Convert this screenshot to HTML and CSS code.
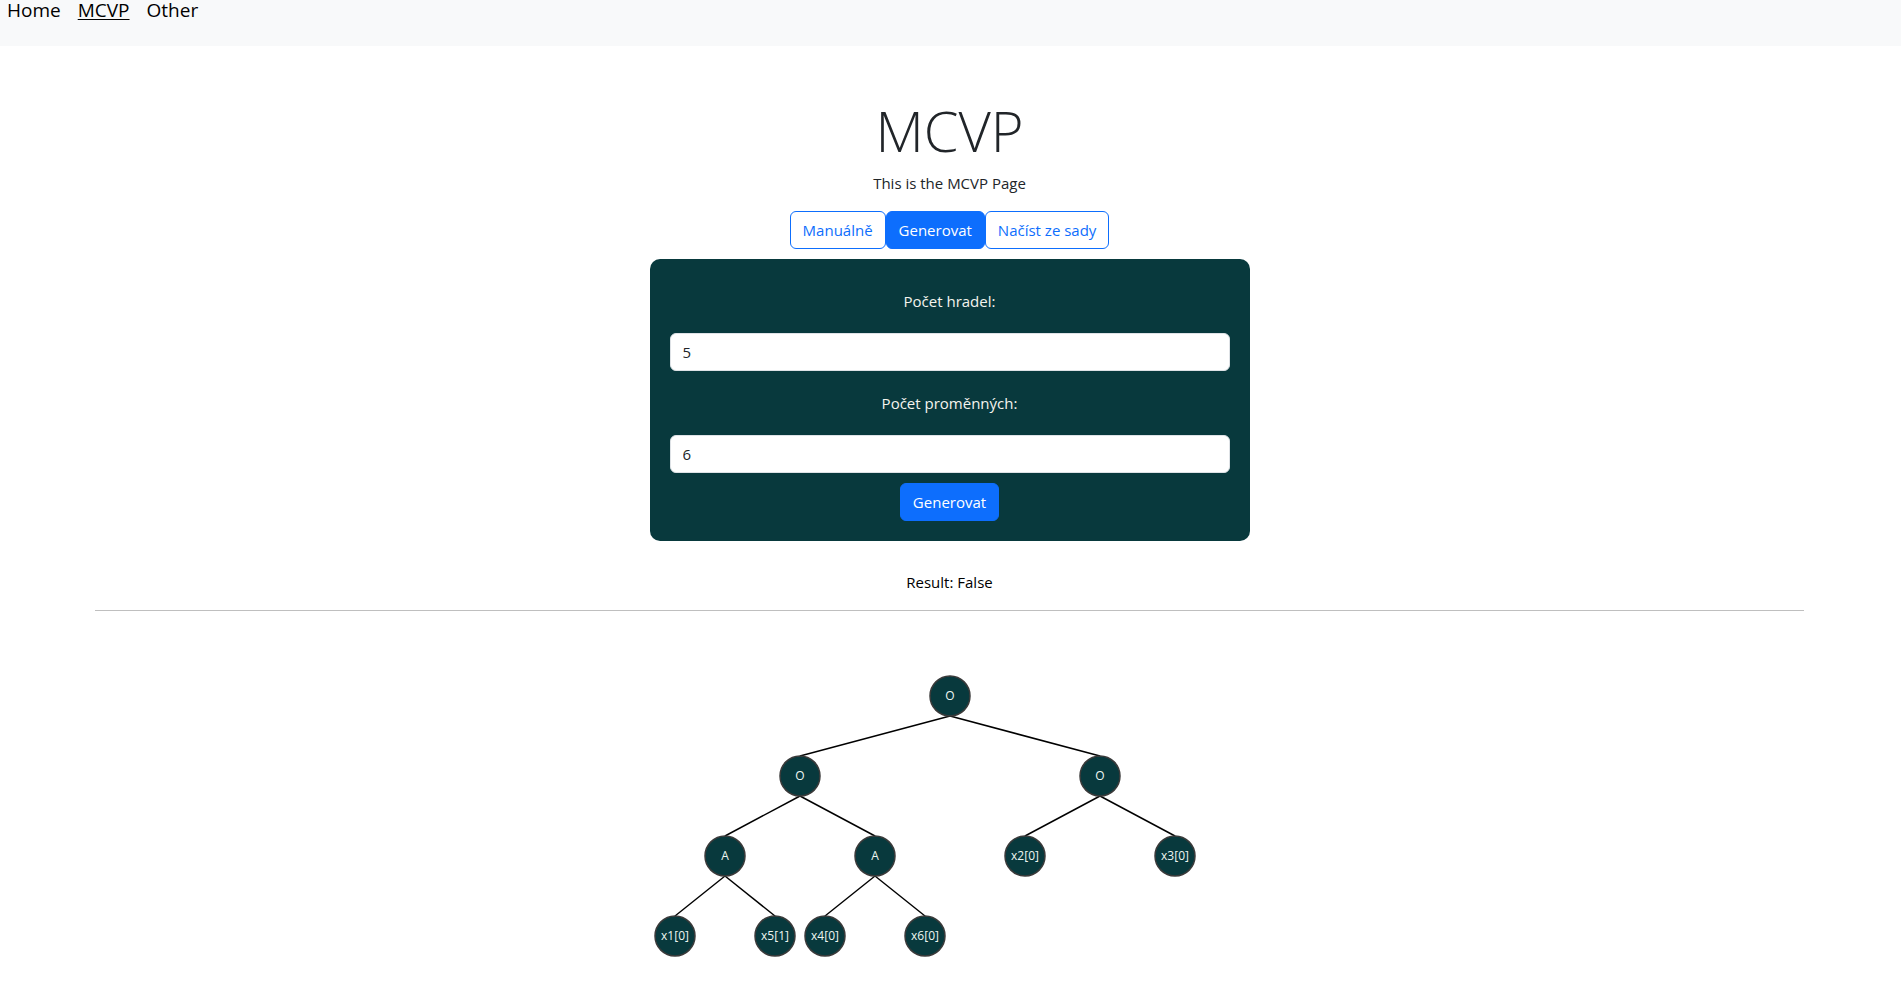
FILE: index.html
```html
<!DOCTYPE html>
<html lang="cs">
<head>
<meta charset="utf-8">
<title>MCVP</title>
<link rel="stylesheet" href="styles.css">
</head>
<body>
<nav class="topnav">
  <a href="#" class="nav-link">Home</a>
  <a href="#" class="nav-link active">MCVP</a>
  <a href="#" class="nav-link">Other</a>
</nav>
<main class="page">
  <h1 class="title">MCVP</h1>
  <p class="subtitle">This is the MCVP Page</p>
  <div class="btn-group">
    <button type="button" class="btn btn-outline">Manuálně</button>
    <button type="button" class="btn btn-primary">Generovat</button>
    <button type="button" class="btn btn-outline">Načíst ze sady</button>
  </div>
  <form class="panel">
    <label class="panel-label" for="gates">Počet hradel:</label>
    <input class="form-control" id="gates" type="text" value="5">
    <label class="panel-label" for="vars">Počet proměnných:</label>
    <input class="form-control" id="vars" type="text" value="6">
    <button type="button" class="btn btn-primary btn-submit">Generovat</button>
  </form>
  <p class="result">Result: False</p>
  <hr class="divider">
  <svg class="tree" width="600" height="300" viewBox="0 0 600 300">
    <g class="links">
      <line x1="300" y1="50" x2="150" y2="90"/>
      <line x1="300" y1="50" x2="450" y2="90"/>
      <line x1="150" y1="130" x2="75" y2="170"/>
      <line x1="150" y1="130" x2="225" y2="170"/>
      <line x1="450" y1="130" x2="375" y2="170"/>
      <line x1="450" y1="130" x2="525" y2="170"/>
      <line x1="75" y1="210" x2="25" y2="250"/>
      <line x1="75" y1="210" x2="125" y2="250"/>
      <line x1="225" y1="210" x2="175" y2="250"/>
      <line x1="225" y1="210" x2="275" y2="250"/>
    </g>
    <g class="nodes">
      <g transform="translate(300,30)"><circle r="20"/><text dy="0.35em">O</text></g>
      <g transform="translate(150,110)"><circle r="20"/><text dy="0.35em">O</text></g>
      <g transform="translate(450,110)"><circle r="20"/><text dy="0.35em">O</text></g>
      <g transform="translate(75,190)"><circle r="20"/><text dy="0.35em">A</text></g>
      <g transform="translate(225,190)"><circle r="20"/><text dy="0.35em">A</text></g>
      <g transform="translate(375,190)"><circle r="20"/><text dy="0.35em">x2[0]</text></g>
      <g transform="translate(525,190)"><circle r="20"/><text dy="0.35em">x3[0]</text></g>
      <g transform="translate(25,270)"><circle r="20"/><text dy="0.35em">x1[0]</text></g>
      <g transform="translate(125,270)"><circle r="20"/><text dy="0.35em">x5[1]</text></g>
      <g transform="translate(175,270)"><circle r="20"/><text dy="0.35em">x4[0]</text></g>
      <g transform="translate(275,270)"><circle r="20"/><text dy="0.35em">x6[0]</text></g>
    </g>
  </svg>
</main>
</body>
</html>
```

FILE: styles.css
```css
* {
  box-sizing: border-box;
}

html, body {
  margin: 0;
  padding: 0;
}

body {
  font-family: "Open Sans", "Noto Sans", "Liberation Sans", sans-serif;
  font-size: 16px;
  line-height: 24px;
  color: #212529;
  background: #ffffff;
  overflow: hidden;
}

.topnav {
  display: flex;
  align-items: flex-start;
  gap: 17px;
  height: 46px;
  padding-left: 7px;
  margin-right: 1px;
  background: #f8f9fa;
}

.nav-link {
  font-size: 19px;
  line-height: 20px;
  color: #000000;
  text-decoration: none;
}

.nav-link.active {
  text-decoration: underline;
  text-underline-offset: 2px;
}

.page {
  display: flex;
  flex-direction: column;
  align-items: center;
  padding-top: 51px;
  padding-right: 3px;
}

.title {
  margin: 0 0 7px;
  font-size: 56px;
  font-weight: 300;
  line-height: 67px;
  color: #212529;
}

.subtitle {
  margin: 0 0 16px;
  font-size: 15px;
}

.btn-group {
  display: flex;
  margin-bottom: 10px;
}

.btn {
  font-family: inherit;
  font-size: 15px;
  line-height: 24px;
  padding: 6px 12px;
  border: 1px solid #0d6efd;
  border-radius: 6px;
  cursor: pointer;
}

.btn-outline {
  background: #ffffff;
  color: #0d6efd;
}

.btn-primary {
  background: #0d6efd;
  color: #ffffff;
}

.panel {
  display: flex;
  flex-direction: column;
  align-items: center;
  gap: 10px;
  width: 600px;
  padding: 20px;
  margin: 0 0 29px;
  background: #08393d;
  border-radius: 10px;
}

.panel-label {
  padding: 10px 0;
  font-size: 15px;
  color: #f4f4ee;
}

.form-control {
  width: 100%;
  height: 38px;
  padding: 6px 12px;
  font-family: inherit;
  font-size: 15px;
  color: #212529;
  background: #ffffff;
  border: 1px solid #dee2e6;
  border-radius: 6px;
}

.btn-submit {
  width: 99px;
  padding: 6px 0;
}

.result {
  margin: 0 0 16px;
  font-size: 15px;
  color: #000000;
}

.divider {
  width: 90%;
  margin: 0 0 55px;
  border: 0;
  border-top: 1px solid #bfbfbf;
}

.tree {
  display: block;
}

.links line {
  stroke: #000000;
  stroke-width: 1.5;
}

.nodes circle {
  fill: #08393d;
  stroke: #3a3a3a;
  stroke-width: 1.5;
}

.nodes text {
  font-family: "Open Sans", "Noto Sans", sans-serif;
  font-size: 12px;
  fill: #eef6f2;
  text-anchor: middle;
}
```
